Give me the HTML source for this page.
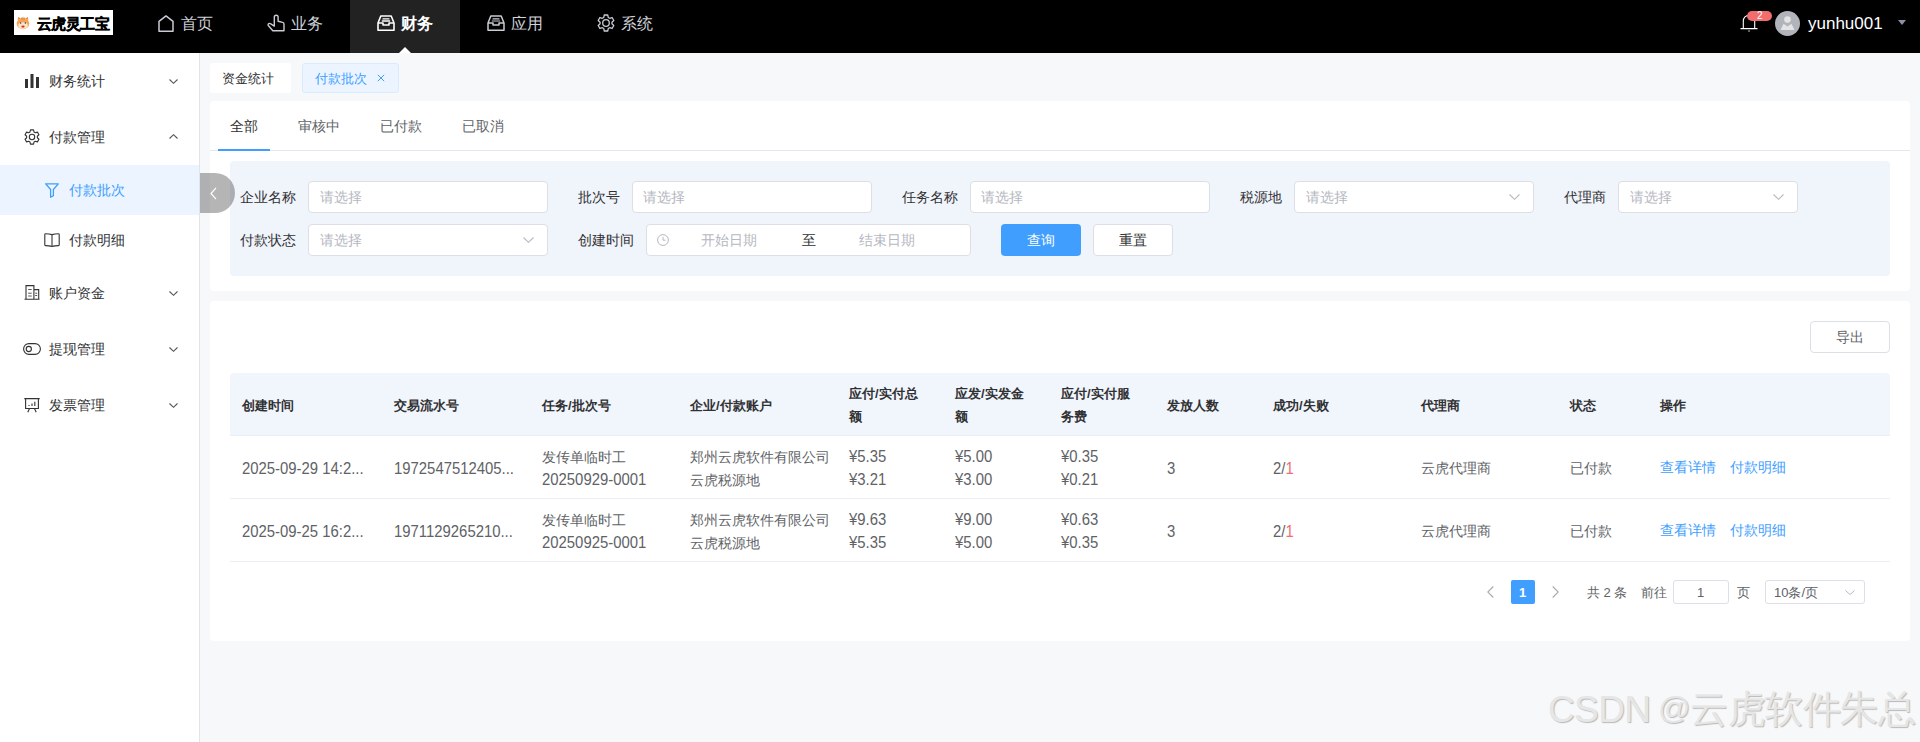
<!DOCTYPE html>
<html><head><meta charset="utf-8">
<style>
*{margin:0;padding:0;box-sizing:border-box}
html,body{width:1920px;height:742px;overflow:hidden;background:#f7f8fa;font-family:"Liberation Sans",sans-serif;color:#303133}
.a{position:absolute}
.t{position:absolute;white-space:nowrap;line-height:1}
svg{position:absolute;overflow:visible}
#hdr{left:0;top:0;width:1920px;height:53px;background:#000}
.nav{color:#cfd2d8;font-size:16px;margin-top:1px}
#side{left:0;top:53px;width:200px;height:689px;background:#fff;border-right:1px solid #e1e4ea}
.mi{font-size:14px;color:#303133}
.card{position:absolute;background:#fff;border-radius:4px}
.lbl{font-size:14px;color:#303133}
.inp{position:absolute;background:#fff;border:1px solid #dcdfe6;border-radius:4px;height:32px}
.ph{font-size:14px;color:#b5b8bf}
.th{font-size:13px;font-weight:bold;color:#303133}
.td{font-size:14px;color:#606266}
.lnk{font-size:14px;color:#409eff}
.n{font-size:16px;transform:scaleX(0.93);transform-origin:0 0}
.rb{position:absolute;left:230px;width:1660px;height:1px;background:#ebeef5}
</style></head><body>
<!-- HEADER -->
<div id="hdr" class="a">
  <div class="a" style="left:14px;top:10px;width:99px;height:25px;background:#fff"></div>
  <svg style="left:16px;top:16px" width="14" height="14" viewBox="0 0 14 14">
    <path d="M1.6 4.2 L2.2 0.9 L4.8 2.4 Z M12.4 4.2 L11.8 0.9 L9.2 2.4 Z" fill="#e98a3c"/>
    <ellipse cx="7" cy="7.6" rx="6.3" ry="5.6" fill="#f4a457"/>
    <ellipse cx="7" cy="9.6" rx="4.8" ry="3.3" fill="#fde4c4"/>
    <path d="M7 0.8 V3.4 M5.4 1.6 L5.8 3.4 M8.6 1.6 L8.2 3.4" stroke="#d06b26" stroke-width="0.7"/>
    <circle cx="4.6" cy="7" r="0.75" fill="#3a3a3a"/><circle cx="9.4" cy="7" r="0.75" fill="#3a3a3a"/>
    <ellipse cx="7" cy="10.6" rx="1.7" ry="1.1" fill="#d8322e"/>
  </svg>
  <div class="t" style="left:37px;top:15.5px;font-size:15px;font-weight:bold;color:#000;letter-spacing:-0.6px;-webkit-text-stroke:0.35px #000">云虎灵工宝</div>

  <!-- nav -->
  <svg style="left:158px;top:15px" width="16" height="17" viewBox="0 0 16 17"><path d="M1 16.2 V6.3 L8 0.9 L15 6.3 V16.2 Z" fill="none" stroke="#c9ccd2" stroke-width="1.5" stroke-linejoin="round"/></svg>
  <div class="t nav" style="left:181px;top:15px">首页</div>

  <svg style="left:267px;top:14px" width="18" height="18" viewBox="0 0 18 18"><path d="M7.3 12.1 V3.2 a1.9 1.9 0 0 1 3.8 0 V7.2 L15.6 8.4 a1.8 1.8 0 0 1 1.4 1.8 V16.8 H5.8 L1.3 11.5 a1.3 1.3 0 0 1 0.5 -1.9 a1.6 1.6 0 0 1 1.6 0.1 Z" fill="none" stroke="#c9ccd2" stroke-width="1.4" stroke-linejoin="round"/></svg>
  <div class="t nav" style="left:291px;top:15px">业务</div>

  <div class="a" style="left:350px;top:0;width:110px;height:53px;background:#222"></div>
  <div class="a" style="left:399px;top:47px;width:0;height:0;border-left:6px solid transparent;border-right:6px solid transparent;border-bottom:6px solid #fff"></div>
  <svg style="left:377px;top:15px" width="18" height="16" viewBox="0 0 18 16"><path d="M1 15.2 V8 L3.8 1 H14.2 L17 8 V15.2 Z M1 8 H6 V10 H12 V8 H17" fill="none" stroke="#fff" stroke-width="1.6" stroke-linejoin="round"/><path d="M6 3.9 H12 M5.3 6 H12.7" stroke="#fff" stroke-width="1.3" stroke-linecap="round"/></svg>
  <div class="t nav" style="left:401px;top:15px;color:#fff;font-weight:bold">财务</div>

  <svg style="left:487px;top:15px" width="18" height="16" viewBox="0 0 18 16"><path d="M1 15.2 V8 L3.8 1 H14.2 L17 8 V15.2 Z M1 8 H6 V10 H12 V8 H17" fill="none" stroke="#c9ccd2" stroke-width="1.5" stroke-linejoin="round"/><path d="M6 3.9 H12 M5.3 6 H12.7" stroke="#c9ccd2" stroke-width="1.2" stroke-linecap="round"/></svg>
  <div class="t nav" style="left:511px;top:15px">应用</div>

  <svg style="left:597px;top:14px" width="18" height="18" viewBox="0 0 18 18"><path d="M6.75 3.44 L7.30 0.98 L10.70 0.98 L11.25 3.44 L12.69 4.27 L15.09 3.51 L16.80 6.47 L14.94 8.16 L14.94 9.84 L16.80 11.53 L15.09 14.49 L12.69 13.73 L11.25 14.56 L10.70 17.02 L7.30 17.02 L6.75 14.56 L5.31 13.73 L2.91 14.49 L1.20 11.53 L3.06 9.84 L3.06 8.16 L1.20 6.47 L2.91 3.51 L5.31 4.27 Z" fill="none" stroke="#c9ccd2" stroke-width="1.3" stroke-linejoin="round"/><circle cx="9" cy="9" r="3.3" fill="none" stroke="#c9ccd2" stroke-width="1.3"/></svg>
  <div class="t nav" style="left:621px;top:15px">系统</div>

  <!-- right -->
  <svg style="left:1740px;top:13px" width="18" height="20" viewBox="0 0 18 20"><path d="M3.3 15.3 V8 a5.7 5.7 0 0 1 11.4 0 V15.3 M0.5 15.6 H17.5" fill="none" stroke="#fff" stroke-width="1.1"/><rect x="8.3" y="17" width="1.4" height="2" fill="#888"/></svg>
  <div class="a" style="left:1747px;top:11px;width:25px;height:10px;border-radius:5px;background:#f26e6e"></div>
  <div class="t" style="left:1757px;top:11px;font-size:10px;color:#fff">2</div>
  <svg style="left:1775px;top:11px" width="25" height="25" viewBox="0 0 25 25"><circle cx="12.5" cy="12.5" r="12.5" fill="#b1b4ba"/><circle cx="12.5" cy="8.6" r="3.3" fill="#e4e4e4"/><path d="M5.5 19 L8.5 12.8 L12.5 15.5 L16.5 12.8 L19.5 19 Z" fill="#e4e4e4"/></svg>
  <div class="t" style="left:1808px;top:15px;font-size:17px;color:#fff">yunhu001</div>
  <div class="a" style="left:1898px;top:20px;width:0;height:0;border-left:4px solid transparent;border-right:4px solid transparent;border-top:5px solid #8a92a4"></div>
</div>

<!-- SIDEBAR -->
<div id="side" class="a"></div>
<div class="a" style="left:0;top:165px;width:199px;height:50px;background:#ebf4ff"></div>

<!-- sidebar items -->
<svg style="left:25px;top:74px" width="14" height="14" viewBox="0 0 14 14"><rect x="0" y="5" width="3" height="9" fill="#333"/><rect x="5.5" y="0" width="3" height="14" fill="#333"/><rect x="11" y="3" width="3" height="11" fill="#333"/></svg>
<div class="t mi" style="left:49px;top:74px">财务统计</div>
<svg style="left:169px;top:79px" width="9" height="5" viewBox="0 0 9 5"><path d="M0.5 0.5 L4.5 4.3 L8.5 0.5" fill="none" stroke="#555" stroke-width="1.1"/></svg>

<svg style="left:24px;top:129px" width="16" height="16" viewBox="0 0 16 16"><path d="M5.98 2.99 L6.48 0.86 L9.52 0.86 L10.02 2.99 L11.32 3.74 L13.42 3.12 L14.94 5.74 L13.35 7.25 L13.35 8.75 L14.94 10.26 L13.42 12.88 L11.32 12.26 L10.02 13.01 L9.52 15.14 L6.48 15.14 L5.98 13.01 L4.68 12.26 L2.58 12.88 L1.06 10.26 L2.65 8.75 L2.65 7.25 L1.06 5.74 L2.58 3.12 L4.68 3.74 Z" fill="none" stroke="#333" stroke-width="1.1" stroke-linejoin="round"/><circle cx="8" cy="8" r="2.7" fill="none" stroke="#333" stroke-width="1.1"/></svg>
<div class="t mi" style="left:49px;top:130px">付款管理</div>
<svg style="left:169px;top:134px" width="9" height="5" viewBox="0 0 9 5"><path d="M0.5 4.5 L4.5 0.7 L8.5 4.5" fill="none" stroke="#555" stroke-width="1.1"/></svg>

<svg style="left:45px;top:183px" width="14" height="15" viewBox="0 0 14 15"><path d="M0.7 0.8 H13.3 L8.4 6.5 V12.6 L5.6 14.2 V6.5 Z" fill="none" stroke="#409eff" stroke-width="1.3" stroke-linejoin="round"/></svg>
<div class="t mi" style="left:69px;top:183px;color:#409eff">付款批次</div>

<svg style="left:44px;top:233px" width="16" height="14" viewBox="0 0 16 14"><path d="M0.8 1.5 Q0.8 0.7 1.6 0.7 Q5 0.7 8 1.6 Q11 0.7 14.4 0.7 Q15.2 0.7 15.2 1.5 V12 Q15.2 12.6 14.4 12.6 Q11 12.6 8 13.4 Q5 12.6 1.6 12.6 Q0.8 12.6 0.8 12 Z" fill="none" stroke="#333" stroke-width="1.1"/><path d="M8 1.6 V13.2" stroke="#555" stroke-width="1.3"/></svg>
<div class="t mi" style="left:69px;top:233px">付款明细</div>

<svg style="left:24px;top:285px" width="16" height="15" viewBox="0 0 16 15"><path d="M2 14 V0.6 H9.9 V14 M9.9 4.6 H14.7 V14 M0.5 14.3 H15.5" fill="none" stroke="#333" stroke-width="1.1"/><path d="M4.2 4.5 H7.7 M4.2 8.2 H7.7 M4.2 11 H7.7 M11.2 8.2 H13.2 M11.2 10.5 H13.2" stroke="#444" stroke-width="0.9"/></svg>
<div class="t mi" style="left:49px;top:286px">账户资金</div>
<svg style="left:169px;top:291px" width="9" height="5" viewBox="0 0 9 5"><path d="M0.5 0.5 L4.5 4.3 L8.5 0.5" fill="none" stroke="#555" stroke-width="1.1"/></svg>

<svg style="left:23px;top:343px" width="18" height="12" viewBox="0 0 18 12"><rect x="0.6" y="0.6" width="16.8" height="10.8" rx="5.4" fill="none" stroke="#333" stroke-width="1.1"/><circle cx="5.8" cy="6" r="2.6" fill="none" stroke="#333" stroke-width="1.1"/></svg>
<div class="t mi" style="left:49px;top:342px">提现管理</div>
<svg style="left:169px;top:347px" width="9" height="5" viewBox="0 0 9 5"><path d="M0.5 0.5 L4.5 4.3 L8.5 0.5" fill="none" stroke="#555" stroke-width="1.1"/></svg>

<svg style="left:24px;top:398px" width="16" height="15" viewBox="0 0 16 15"><path d="M0.3 0.6 H15.7 M1.6 0.6 V10.5 H14.4 V0.6 M5.5 10.5 L3.8 14.3 M10.5 10.5 L12.2 14.3" fill="none" stroke="#333" stroke-width="1.1"/><path d="M5 7 V8 M8 5.5 V8 M10.8 3.8 V8" stroke="#444" stroke-width="1.2"/></svg>
<div class="t mi" style="left:49px;top:398px">发票管理</div>
<svg style="left:169px;top:403px" width="9" height="5" viewBox="0 0 9 5"><path d="M0.5 0.5 L4.5 4.3 L8.5 0.5" fill="none" stroke="#555" stroke-width="1.1"/></svg>

<!-- collapse -->
<div class="a" style="left:200px;top:173px;width:35px;height:40px;border-radius:0 20px 20px 0;background:rgba(0,0,0,0.29);z-index:5"></div>
<svg style="left:210px;top:187px;z-index:6" width="7" height="13" viewBox="0 0 7 13"><path d="M6 0.8 L1 6.5 L6 12.2" fill="none" stroke="#fff" stroke-width="1.2"/></svg>


<!-- TAGS -->
<div class="a" style="left:210px;top:63px;width:81px;height:30px;background:#fff;border-radius:3px"></div>
<div class="t" style="left:222px;top:71.5px;font-size:13px;color:#303133">资金统计</div>
<div class="a" style="left:302px;top:63px;width:97px;height:30px;background:#ecf5ff;border:1px solid #d9ecff;border-radius:3px"></div>
<div class="t" style="left:315px;top:71.5px;font-size:13px;color:#409eff">付款批次</div>
<svg style="left:377px;top:74px" width="8" height="8" viewBox="0 0 8 8"><path d="M0.8 0.8 L7.2 7.2 M7.2 0.8 L0.8 7.2" stroke="#409eff" stroke-width="1"/></svg>

<!-- CARD 1 -->
<div class="card" style="left:210px;top:101px;width:1700px;height:190px"></div>
<div class="t" style="left:230px;top:119px;font-size:14px;color:#303133">全部</div>
<div class="t" style="left:298px;top:119px;font-size:14px;color:#606266">审核中</div>
<div class="t" style="left:380px;top:119px;font-size:14px;color:#606266">已付款</div>
<div class="t" style="left:462px;top:119px;font-size:14px;color:#606266">已取消</div>
<div class="a" style="left:210px;top:150px;width:1700px;height:1px;background:#e4e7ed"></div>
<div class="a" style="left:218px;top:149px;width:52px;height:2px;background:#409eff"></div>

<div class="a" style="left:230px;top:161px;width:1660px;height:115px;background:#f0f4fb;border-radius:4px"></div>
<!-- row1 -->
<div class="t lbl" style="left:240px;top:190px">企业名称</div>
<div class="inp" style="left:308px;top:181px;width:240px"></div>
<div class="t ph" style="left:320px;top:190px">请选择</div>

<div class="t lbl" style="left:578px;top:190px">批次号</div>
<div class="inp" style="left:632px;top:181px;width:240px"></div>
<div class="t ph" style="left:643px;top:190px">请选择</div>

<div class="t lbl" style="left:902px;top:190px">任务名称</div>
<div class="inp" style="left:970px;top:181px;width:240px"></div>
<div class="t ph" style="left:981px;top:190px">请选择</div>

<div class="t lbl" style="left:1240px;top:190px">税源地</div>
<div class="inp" style="left:1294px;top:181px;width:240px"></div>
<div class="t ph" style="left:1306px;top:190px">请选择</div>
<svg style="left:1509px;top:194px" width="11" height="6" viewBox="0 0 11 6"><path d="M0.5 0.5 L5.5 5.3 L10.5 0.5" fill="none" stroke="#b5b8bf" stroke-width="1.1"/></svg>

<div class="t lbl" style="left:1564px;top:190px">代理商</div>
<div class="inp" style="left:1618px;top:181px;width:180px"></div>
<div class="t ph" style="left:1630px;top:190px">请选择</div>
<svg style="left:1773px;top:194px" width="11" height="6" viewBox="0 0 11 6"><path d="M0.5 0.5 L5.5 5.3 L10.5 0.5" fill="none" stroke="#b5b8bf" stroke-width="1.1"/></svg>

<!-- row2 -->
<div class="t lbl" style="left:240px;top:233px">付款状态</div>
<div class="inp" style="left:308px;top:224px;width:240px"></div>
<div class="t ph" style="left:320px;top:233px">请选择</div>
<svg style="left:523px;top:237px" width="11" height="6" viewBox="0 0 11 6"><path d="M0.5 0.5 L5.5 5.3 L10.5 0.5" fill="none" stroke="#b5b8bf" stroke-width="1.1"/></svg>

<div class="t lbl" style="left:578px;top:233px">创建时间</div>
<div class="inp" style="left:646px;top:224px;width:325px"></div>
<svg style="left:657px;top:234px" width="12" height="12" viewBox="0 0 12 12"><circle cx="6" cy="6" r="5.4" fill="none" stroke="#b5b8bf" stroke-width="1"/><path d="M6 2.8 V6.2 H8.6" fill="none" stroke="#b5b8bf" stroke-width="1"/></svg>
<div class="t ph" style="left:701px;top:233px">开始日期</div>
<div class="t lbl" style="left:802px;top:233px">至</div>
<div class="t ph" style="left:859px;top:233px">结束日期</div>

<div class="a" style="left:1001px;top:224px;width:80px;height:32px;background:#409eff;border-radius:4px"></div>
<div class="t" style="left:1027px;top:233px;font-size:14px;color:#fff">查询</div>
<div class="inp" style="left:1093px;top:224px;width:80px"></div>
<div class="t lbl" style="left:1119px;top:233px">重置</div>

<!-- CARD 2 -->
<div class="card" style="left:210px;top:301px;width:1700px;height:340px"></div>
<div class="inp" style="left:1810px;top:321px;width:80px"></div>
<div class="t" style="left:1836px;top:330px;font-size:14px;color:#606266">导出</div>

<div class="a" style="left:230px;top:373px;width:1660px;height:63px;background:#f1f5fc;border-radius:4px 4px 0 0"></div>
<div class="rb" style="top:435px"></div>
<div class="rb" style="top:498px"></div>
<div class="rb" style="top:561px"></div>

<div class="t th" style="left:242px;top:399px">创建时间</div>
<div class="t th" style="left:394px;top:399px">交易流水号</div>
<div class="t th" style="left:542px;top:399px">任务/批次号</div>
<div class="t th" style="left:690px;top:399px">企业/付款账户</div>
<div class="t th" style="left:849px;top:387px">应付/实付总</div>
<div class="t th" style="left:849px;top:410px">额</div>
<div class="t th" style="left:955px;top:387px">应发/实发金</div>
<div class="t th" style="left:955px;top:410px">额</div>
<div class="t th" style="left:1061px;top:387px">应付/实付服</div>
<div class="t th" style="left:1061px;top:410px">务费</div>
<div class="t th" style="left:1167px;top:399px">发放人数</div>
<div class="t th" style="left:1273px;top:399px">成功/失败</div>
<div class="t th" style="left:1421px;top:399px">代理商</div>
<div class="t th" style="left:1570px;top:399px">状态</div>
<div class="t th" style="left:1660px;top:399px">操作</div>
<div class="t td n" style="left:242px;top:461px">2025-09-29 14:2...</div>
<div class="t td n" style="left:394px;top:461px">1972547512405...</div>
<div class="t td" style="left:542px;top:450px">发传单临时工</div>
<div class="t td n" style="left:542px;top:472px">20250929-0001</div>
<div class="t td" style="left:690px;top:450px">郑州云虎软件有限公司</div>
<div class="t td" style="left:690px;top:473px">云虎税源地</div>
<div class="t td n" style="left:849px;top:449px">¥5.35</div>
<div class="t td n" style="left:849px;top:472px">¥3.21</div>
<div class="t td n" style="left:955px;top:449px">¥5.00</div>
<div class="t td n" style="left:955px;top:472px">¥3.00</div>
<div class="t td n" style="left:1061px;top:449px">¥0.35</div>
<div class="t td n" style="left:1061px;top:472px">¥0.21</div>
<div class="t td n" style="left:1167px;top:461px">3</div>
<div class="t td n" style="left:1273px;top:461px">2/<span style="color:#f56c6c">1</span></div>
<div class="t td" style="left:1421px;top:461px">云虎代理商</div>
<div class="t td" style="left:1570px;top:461px">已付款</div>
<div class="t lnk" style="left:1660px;top:460px">查看详情</div><div class="t lnk" style="left:1730px;top:460px">付款明细</div>
<div class="t td n" style="left:242px;top:524px">2025-09-25 16:2...</div>
<div class="t td n" style="left:394px;top:524px">1971129265210...</div>
<div class="t td" style="left:542px;top:513px">发传单临时工</div>
<div class="t td n" style="left:542px;top:535px">20250925-0001</div>
<div class="t td" style="left:690px;top:513px">郑州云虎软件有限公司</div>
<div class="t td" style="left:690px;top:536px">云虎税源地</div>
<div class="t td n" style="left:849px;top:512px">¥9.63</div>
<div class="t td n" style="left:849px;top:535px">¥5.35</div>
<div class="t td n" style="left:955px;top:512px">¥9.00</div>
<div class="t td n" style="left:955px;top:535px">¥5.00</div>
<div class="t td n" style="left:1061px;top:512px">¥0.63</div>
<div class="t td n" style="left:1061px;top:535px">¥0.35</div>
<div class="t td n" style="left:1167px;top:524px">3</div>
<div class="t td n" style="left:1273px;top:524px">2/<span style="color:#f56c6c">1</span></div>
<div class="t td" style="left:1421px;top:524px">云虎代理商</div>
<div class="t td" style="left:1570px;top:524px">已付款</div>
<div class="t lnk" style="left:1660px;top:523px">查看详情</div><div class="t lnk" style="left:1730px;top:523px">付款明细</div>

<!-- PAGER -->
<svg style="left:1487px;top:586px" width="7" height="12" viewBox="0 0 7 12"><path d="M6.3 0.5 L0.8 6 L6.3 11.5" fill="none" stroke="#a8abb2" stroke-width="1.1"/></svg>
<div class="a" style="left:1511px;top:580px;width:24px;height:24px;background:#409eff;border-radius:2px"></div>
<div class="t" style="left:1519px;top:586px;font-size:13px;font-weight:bold;color:#fff">1</div>
<svg style="left:1552px;top:586px" width="7" height="12" viewBox="0 0 7 12"><path d="M0.7 0.5 L6.2 6 L0.7 11.5" fill="none" stroke="#a8abb2" stroke-width="1.1"/></svg>
<div class="t" style="left:1587px;top:586px;font-size:13px;color:#606266">共 2 条</div>
<div class="t" style="left:1641px;top:586px;font-size:13px;color:#606266">前往</div>
<div class="a" style="left:1673px;top:580px;width:56px;height:24px;border:1px solid #dcdfe6;border-radius:3px;background:#fff"></div>
<div class="t" style="left:1697px;top:586px;font-size:13px;color:#606266">1</div>
<div class="t" style="left:1737px;top:586px;font-size:13px;color:#606266">页</div>
<div class="a" style="left:1765px;top:580px;width:100px;height:24px;border:1px solid #dcdfe6;border-radius:3px;background:#fff"></div>
<div class="t" style="left:1774px;top:586px;font-size:13px;color:#606266">10条/页</div>
<svg style="left:1845px;top:590px" width="10" height="5" viewBox="0 0 10 5"><path d="M0.5 0.5 L5 4.5 L9.5 0.5" fill="none" stroke="#b5b8bf" stroke-width="1"/></svg>

<!-- WATERMARK -->
<div class="t" style="left:1548px;top:691px;font-size:37px;color:#e6e6e6;text-shadow:1px 1px 1px #b9b9b9;letter-spacing:-0.6px">CSDN</div>
<div class="t" style="left:1658px;top:692px;font-size:32px;color:#e6e6e6;text-shadow:1px 1px 1px #b9b9b9">@</div>
<div class="t" style="left:1690px;top:690px;font-size:38px;color:#e6e6e6;text-shadow:1px 1px 1px #b9b9b9;letter-spacing:-0.4px">云虎软件朱总</div>

</body></html>
